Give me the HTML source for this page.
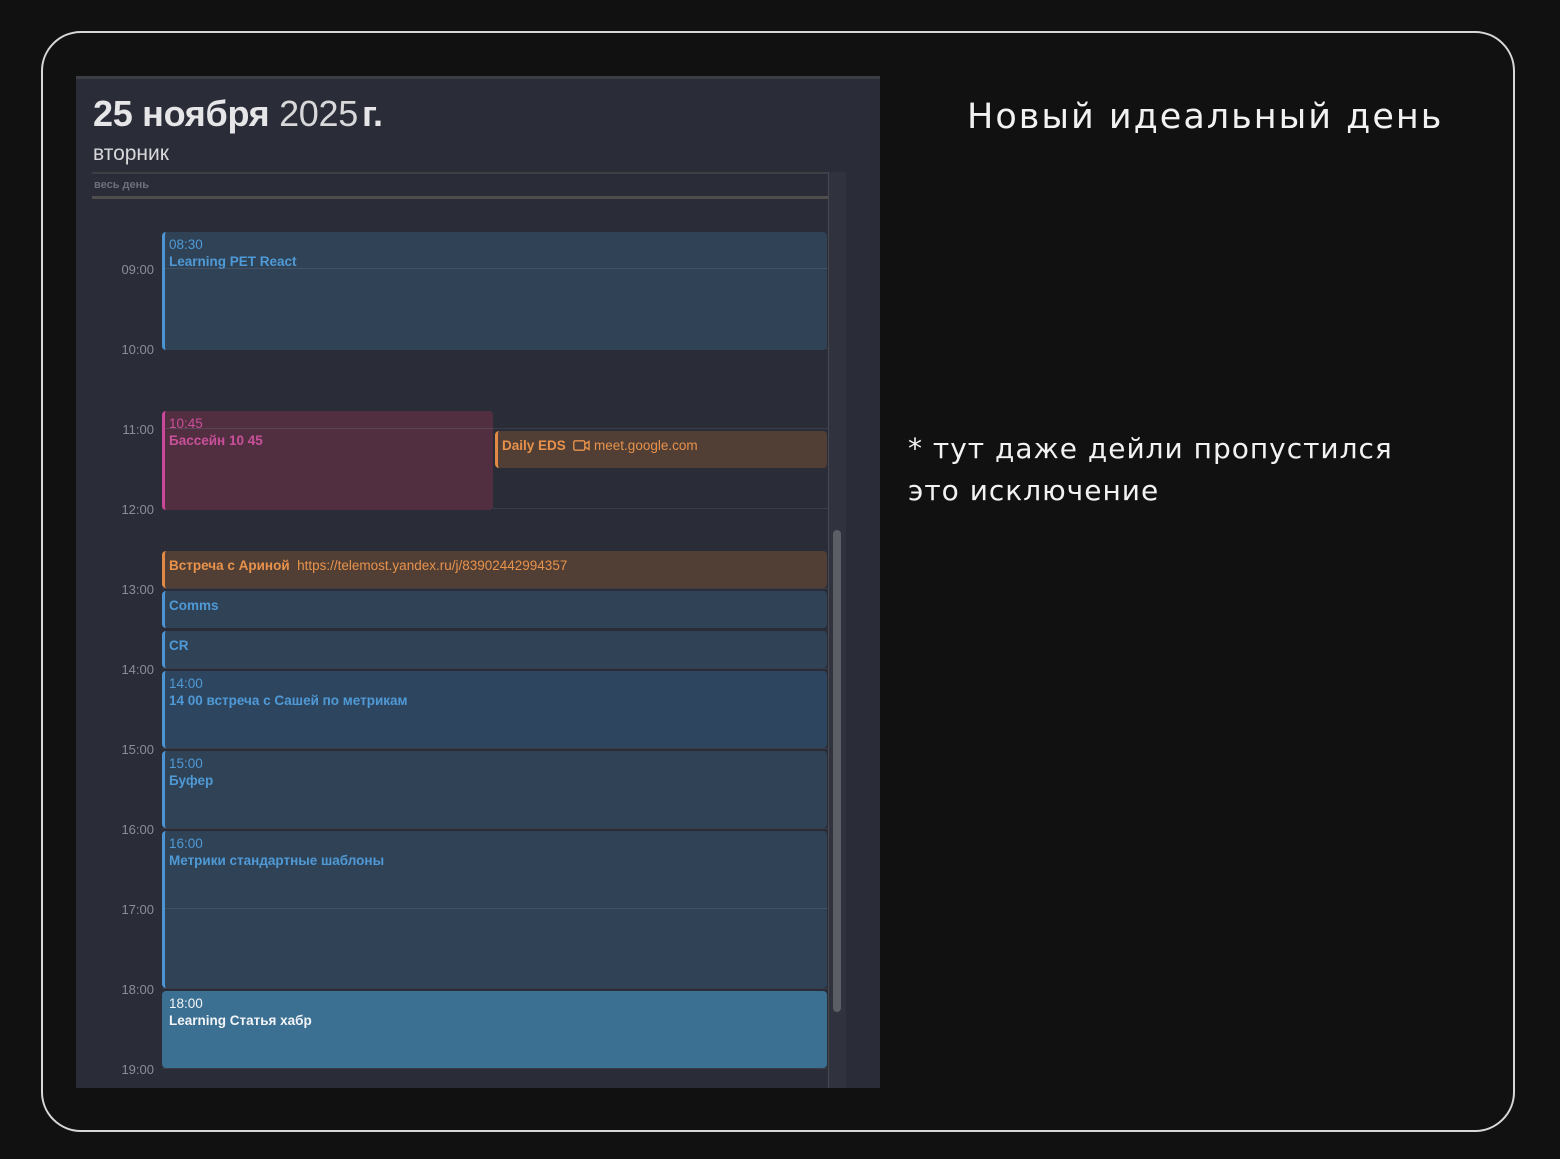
<!DOCTYPE html>
<html><head><meta charset="utf-8"><style>
*{margin:0;padding:0;box-sizing:border-box}
body{width:1560px;height:1159px;background:#111112;position:relative;overflow:hidden;font-family:"Liberation Sans","DejaVu Sans",sans-serif}
.frame{position:absolute;left:41px;top:31px;width:1474px;height:1101px;border:2.5px solid #d8d8d8;border-radius:40px}
.cal{position:absolute;left:76px;top:76px;width:804px;height:1012px;background:#2a2d38;border-top:3px solid #3c3e46;overflow:hidden}
.abs{position:absolute}
.t{position:absolute;right:726px;width:60px;text-align:right;font-size:13px;color:#8b8e97}
.g{position:absolute;left:86px;width:666px;height:1px;background:#3a3d48}
.g2{position:absolute;left:89px;width:662px;height:1px;background:rgba(90,100,115,0.45)}
.ev{position:absolute;border-radius:4px;border-left:3px solid;padding:4px 0 0 4px;font-size:13.5px;line-height:17px;overflow:hidden}
.ev b{font-weight:bold}
.blue{background:#2f4256;border-color:#4d95d2;color:#4f9ad6}
.or{background:#513f35;border-color:#e08a45;color:#e8924b}
.hand{position:absolute;color:#f2f2f2;font-family:"DejaVu Sans","Liberation Sans",sans-serif;letter-spacing:1px}
</style></head><body>
<div class="frame"></div>
<div class="cal">
 <div class="abs" style="left:17px;top:14px;font-size:36px;color:#e6e6e8;white-space:nowrap;letter-spacing:-0.3px"><b>25 ноября</b> <span style="font-weight:normal;color:#d8d8da">2025</span><b style="margin-left:4px">г.</b></div>
 <div class="abs" style="left:17px;top:63px;font-size:21px;color:#d8d8da">вторник</div>
 <div class="abs" style="left:16px;top:93px;width:754px;height:2px;background:#3d3f45"></div>
 <div class="abs" style="left:18px;top:100px;font-size:11px;font-weight:bold;color:#6d7078">весь день</div>
 <div class="abs" style="left:16px;top:117px;width:754px;height:3px;background:#4f4e4a"></div>
 <div class="abs" style="left:752px;top:93px;width:18px;height:930px;background:#30333e;border-left:1px solid #464850"></div>
 <div class="abs" style="left:757px;top:451px;width:8px;height:482px;background:#5c5e66;border-radius:4px"></div>
</div>
<div style="position:absolute;left:76px;top:76px;width:804px;height:1012px;overflow:hidden">
 <div class="g" style="top:192px"></div><div class="g" style="top:272px"></div><div class="g" style="top:352px"></div><div class="g" style="top:432px"></div><div class="g" style="top:512px"></div><div class="g" style="top:592px"></div><div class="g" style="top:672px"></div><div class="g" style="top:752px"></div><div class="g" style="top:832px"></div><div class="g" style="top:912px"></div><div class="g" style="top:992px"></div>
 <div class="t" style="top:186px">09:00</div><div class="t" style="top:266px">10:00</div><div class="t" style="top:346px">11:00</div><div class="t" style="top:426px">12:00</div><div class="t" style="top:506px">13:00</div><div class="t" style="top:586px">14:00</div><div class="t" style="top:666px">15:00</div><div class="t" style="top:746px">16:00</div><div class="t" style="top:826px">17:00</div><div class="t" style="top:906px">18:00</div><div class="t" style="top:986px">19:00</div>
 <div class="ev blue" style="left:86px;top:156px;width:665px;height:118px">08:30<br><b>Learning PET React</b></div>
 <div class="ev" style="left:86px;top:335px;width:331px;height:99px;background:#522f40;border-color:#c9489a;color:#c9509a">10:45<br><b>Бассейн 10 45</b></div>
 <div class="ev or" style="left:419px;top:355px;width:332px;height:37px;padding-top:6px"><b>Daily EDS</b>&nbsp; <svg width="17" height="11" viewBox="0 0 17 11" style="vertical-align:-1px"><rect x="0.8" y="0.8" width="11" height="9.4" rx="1.5" fill="none" stroke="#e8924b" stroke-width="1.4"/><path d="M12 4 L16 1.5 V9.5 L12 7" fill="none" stroke="#e8924b" stroke-width="1.4"/></svg> meet.google.com</div>
 <div class="ev or" style="left:86px;top:475px;width:665px;height:37px;padding-top:6px"><b>Встреча с Ариной</b>&nbsp; https://telemost.yandex.ru/j/83902442994357</div>
 <div class="ev blue" style="left:86px;top:515px;width:665px;height:37px;padding-top:6px"><b>Comms</b></div>
 <div class="ev blue" style="left:86px;top:555px;width:665px;height:37px;padding-top:6px"><b>CR</b></div>
 <div class="ev blue" style="left:86px;top:595px;width:665px;height:77px;background:#2e4560">14:00<br><b>14 00 встреча с Сашей по метрикам</b></div>
 <div class="ev blue" style="left:86px;top:675px;width:665px;height:77px">15:00<br><b>Буфер</b></div>
 <div class="ev blue" style="left:86px;top:755px;width:665px;height:157px">16:00<br><b>Метрики стандартные шаблоны</b></div>
 <div class="ev" style="left:86px;top:915px;width:665px;height:77px;background:#3b7093;border-color:#3b7093;color:#f2f4f6">18:00<br><b>Learning Статья хабр</b></div>
 <div class="g2" style="top:192px"></div><div class="g2" style="top:352px;width:328px"></div><div class="g2" style="top:832px"></div>
</div>
<div class="hand" style="left:967px;top:97px;font-size:35px;letter-spacing:2px">Новый идеальный день</div>
<div class="hand" style="left:908px;top:428px;font-size:28px;line-height:42px">* тут даже дейли пропустился<br>это исключение</div>
</body></html>
